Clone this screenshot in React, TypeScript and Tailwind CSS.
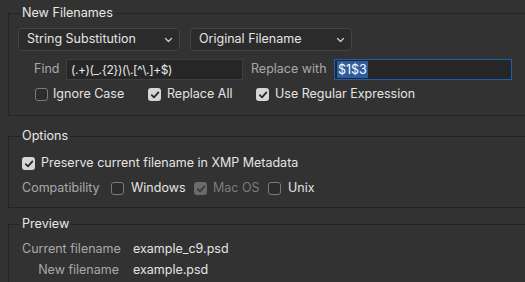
import React from "react";

function Check({ checked, disabled }: { checked?: boolean; disabled?: boolean }) {
  if (checked) {
    return (
      <span
        className={
          "flex h-[13px] w-[13px] shrink-0 items-center justify-center rounded-[3px] " +
          (disabled ? "bg-[#6b6b6b]" : "bg-[#d6d6d6]")
        }
      >
        <svg width="10" height="10" viewBox="0 0 10 10">
          <path
            d="M1.8 5.2 L4 7.4 L8.4 2.4"
            fill="none"
            stroke={disabled ? "#3a3a3a" : "#2a2a2a"}
            strokeWidth="1.8"
            strokeLinecap="round"
            strokeLinejoin="round"
          />
        </svg>
      </span>
    );
  }
  return <span className="h-[13px] w-[13px] shrink-0 rounded-[3px] border border-[#7a7a7a] bg-[#2c2c2c]" />;
}

function Select({ label }: { label: string }) {
  return (
    <div className="flex h-[23px] w-[162px] items-center justify-between rounded-[4px] border border-[#444444] bg-[#2b2b2b] pl-[8px] pr-[6px] text-[12.5px] text-[#e4e4e4]">
      <span className="whitespace-nowrap">{label}</span>
      <svg width="9" height="6" viewBox="0 0 9 6" className="mt-[1px]">
        <path d="M1.5 1.5 L4.5 4.5 L7.5 1.5" fill="none" stroke="#cfcfcf" strokeWidth="1.2" strokeLinecap="round" strokeLinejoin="round" />
      </svg>
    </div>
  );
}

function Group({ title, children, cls }: { title: string; children: React.ReactNode; cls: string }) {
  return (
    <fieldset className={"w-[540px] border border-r-0 border-[#242424] pl-[9px] " + cls}>
      <legend className="ml-[2px] px-[2px] text-[12.6px] leading-[18px] text-[#e8e8e8]">{title}</legend>
      {children}
    </fieldset>
  );
}

export default function App() {
  return (
    <div
      className="h-[282px] w-[525px] overflow-hidden whitespace-nowrap bg-[#323232] pl-[8px] pt-[4px] text-[12.5px] text-[#e4e4e4]"
      style={{ fontFamily: "Inter, 'Noto Sans', sans-serif" }}
    >
      <Group title="New Filenames" cls="h-[112px] pt-[6px]">
        <div className="flex gap-[10px]">
          <Select label="String Substitution" />
          <Select label="Original Filename" />
        </div>
        <div className="mt-[8px] flex h-[21px] items-center pl-[16px]">
          <span className="w-[32px] text-[#a9a9a9]">Find</span>
          <div className="flex h-[21px] w-[177px] items-center border border-[#3e3e3e] bg-[#262626] pl-[4px] text-[12px] tracking-[-0.4px] text-[#e8e8e8]">
            (.+)(_.{"{2}"})(\.[^\.]+$)
          </div>
          <span className="ml-[8px] w-[83px] text-[#a9a9a9]">Replace with</span>
          <div className="flex h-[21px] w-[178px] items-center border-[1.5px] border-[#1f5db0] bg-[#262626] pl-[2px]">
            <span className="bg-[#2c5e9f] px-[1px] leading-[17px] text-white">$1$3</span>
          </div>
        </div>
        <div className="mt-[8px] flex h-[13px] items-center pl-[17px]">
          <Check />
          <span className="ml-[5px] w-[95px]">Ignore Case</span>
          <Check checked />
          <span className="ml-[6px] w-[89px]">Replace All</span>
          <Check checked />
          <span className="ml-[6px]">Use Regular Expression</span>
        </div>
      </Group>
      <Group title="Options" cls="mt-[11px] h-[81px] pt-[12px]">
        <div className="flex h-[13px] items-center pl-[4px]">
          <Check checked />
          <span className="ml-[6px]">Preserve current filename in XMP Metadata</span>
        </div>
        <div className="mt-[12px] flex h-[13px] items-center pl-[4px]">
          <span className="w-[89px] text-[#a9a9a9]">Compatibility</span>
          <Check />
          <span className="ml-[7px] w-[63px]">Windows</span>
          <Check checked disabled />
          <span className="ml-[6px] w-[55px] text-[#7c7c7c]">Mac OS</span>
          <Check />
          <span className="ml-[7px]">Unix</span>
        </div>
      </Group>
      <Group title="Preview" cls="mt-[7px] h-[80px] pt-[6px]">
        <div className="flex h-[21px] items-center pl-[4px]">
          <span className="w-[97px] text-right text-[#a9a9a9]">Current filename</span>
          <span className="ml-[14px]">example_c9.psd</span>
        </div>
        <div className="flex h-[21px] items-center pl-[4px]">
          <span className="w-[97px] text-right text-[#a9a9a9]">New filename</span>
          <span className="ml-[14px]">example.psd</span>
        </div>
      </Group>
    </div>
  );
}
